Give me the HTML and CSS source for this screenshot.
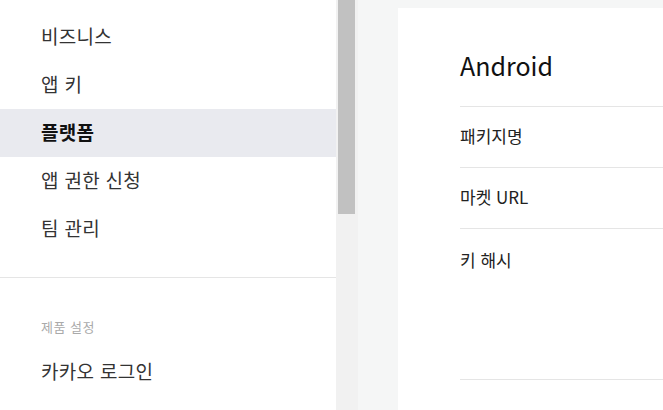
FILE: index.html
```html
<!DOCTYPE html>
<html lang="ko">
<head>
    <meta charset="UTF-8">
    <meta name="viewport" content="width=device-width, initial-scale=1.0">
    <title>플랫폼</title>
    <link rel="stylesheet" href="styles.css">
</head>
<body>
    <nav class="sidebar">
        <ul class="menu">
            <li>비즈니스</li>
            <li>앱 키</li>
            <li class="active">플랫폼</li>
            <li>앱 권한 신청</li>
            <li>팀 관리</li>
        </ul>
        <div class="menu-section">
            <p class="section-title">제품 설정</p>
            <ul class="menu">
                <li>카카오 로그인</li>
            </ul>
        </div>
    </nav>

    <div class="scrollbar"><div class="thumb"></div></div>

    <main>
        <section class="card">
            <h2>Android</h2>
            <div class="row">패키지명</div>
            <div class="row">마켓 URL</div>
            <div class="row tall">키 해시</div>
        </section>
    </main>
</body>
</html>
```

FILE: styles.css
```css
body { margin: 0; height: 410px; overflow: hidden; display: flex; font-family: "Noto Sans CJK KR", "Noto Sans", sans-serif; color: #333; }
ul { list-style: none; margin: 0; padding: 0; }

.sidebar { width: 336px; flex-shrink: 0; background: #fff; padding-top: 13px; }
.menu li { height: 48px; line-height: 46px; padding: 0 0 2px 41px; box-sizing: border-box; font-size: 19px; letter-spacing: 0.3px; }
.menu li.active { background-color: #e9eaef; font-weight: bold; color: #111; }
.menu-section { border-top: 1px solid #e5e5e5; margin-top: 24px; padding-top: 40px; }
.section-title { margin: 0 0 10px; padding-left: 41px; font-size: 13px; line-height: 18px; padding-bottom: 2px; color: #aaa; letter-spacing: 0.5px; }

.scrollbar { width: 22px; flex-shrink: 0; background: #f1f1f1; }
.scrollbar .thumb { height: 214px; margin: 0 3px 0 2px; background: #c1c1c1; }

main { flex-grow: 1; background: #f5f6f6; padding: 8px 0 0 40px; }
.card { background: #fff; height: 100%; padding-left: 62px; }
.card h2 { margin: 0; padding-top: 40px; height: 58px; font-size: 25px; font-weight: normal; line-height: 34px; color: #111; border-bottom: 1px solid #e5e5e5; box-sizing: content-box; }
.row { height: 61px; line-height: 58px; padding-bottom: 2px; box-sizing: border-box; font-size: 17px; color: #222; border-bottom: 1px solid #e5e5e5; }
.row.tall { height: 151px; line-height: 24px; padding-top: 19px; padding-bottom: 0; }
```
